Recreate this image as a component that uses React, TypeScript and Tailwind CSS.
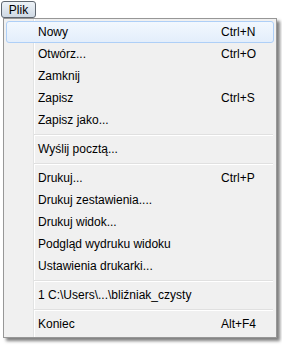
const items: ({ label: string; shortcut?: string; active?: boolean } | 'sep')[] = [
  { label: 'Nowy', shortcut: 'Ctrl+N', active: true },
  { label: 'Otwórz...', shortcut: 'Ctrl+O' },
  { label: 'Zamknij' },
  { label: 'Zapisz', shortcut: 'Ctrl+S' },
  { label: 'Zapisz jako...' },
  'sep',
  { label: 'Wyślij pocztą...' },
  'sep',
  { label: 'Drukuj...', shortcut: 'Ctrl+P' },
  { label: 'Drukuj zestawienia....' },
  { label: 'Drukuj widok...' },
  { label: 'Podgląd wydruku widoku' },
  { label: 'Ustawienia drukarki...' },
  'sep',
  { label: '1 C:\\Users\\...\\bliźniak_czysty' },
  'sep',
  { label: 'Koniec', shortcut: 'Alt+F4' },
]

const App = () => {
  return (
    <div
      className="w-[282px] h-[345px] bg-white text-[12px] text-black overflow-hidden"
      style={{ fontFamily: '"Liberation Sans", Arial, sans-serif' }}
    >
      <div className="ml-[1px] mt-[1px] w-[35px] h-[17px] rounded-[3px] border border-[#5f6770] bg-gradient-to-b from-[#eef3f8] to-[#cfd9e4] flex items-center justify-center leading-none">
        Plik
      </div>
      <div className="ml-[3px] w-[274px] border border-[#979797] p-[2px] shadow-[3px_3px_3px_rgba(0,0,0,0.5)] bg-[linear-gradient(to_right,#f0f0f0_29px,#e2e3e3_29px,#e2e3e3_30px,#ffffff_30px,#ffffff_31px,#f0f0f0_31px)]">
        {items.map((item, i) =>
          item === 'sep' ? (
            <div key={i} className="h-[7px] flex items-center">
              <div className="ml-[28px] mr-[1px] flex-1 border-t border-b border-t-[#e0e0e0] border-b-white" />
            </div>
          ) : (
            <div
              key={i}
              className={
                item.active
                  ? 'h-[22px] flex items-center rounded-[3px] border border-[#aecff7] bg-gradient-to-b from-[#f2f8fe] to-[#e3eefb] pl-[31px]'
                  : 'h-[22px] flex items-center pl-[32px]'
              }
            >
              <span className="flex-1 whitespace-nowrap">{item.label}</span>
              <span className={item.active ? 'w-[52px]' : 'w-[53px]'}>{item.shortcut}</span>
            </div>
          ),
        )}
      </div>
    </div>
  )
}

export default App
